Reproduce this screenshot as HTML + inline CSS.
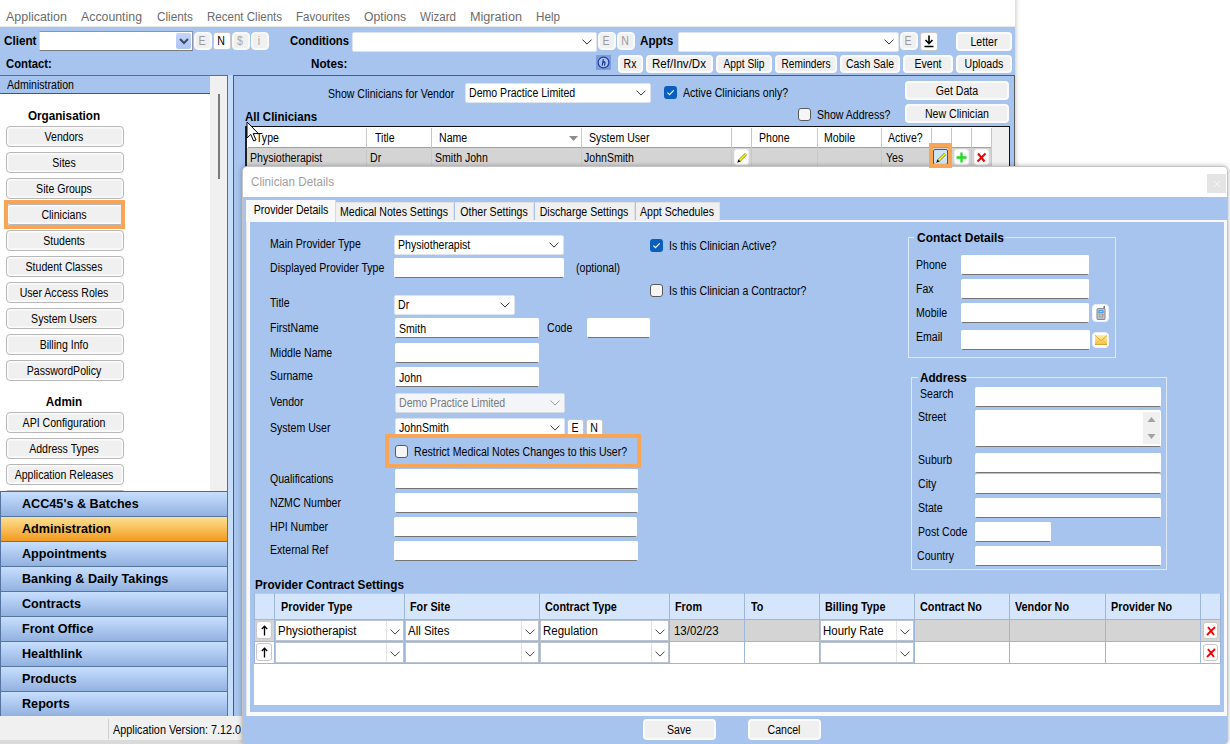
<!DOCTYPE html>
<html><head><meta charset="utf-8"><title>Clinician Details</title>
<style>
html,body{margin:0;padding:0;}
body{width:1230px;height:744px;position:relative;overflow:hidden;background:#fff;font-family:"Liberation Sans",sans-serif;}
div,span,svg{position:absolute;box-sizing:content-box;}
.t{font-size:12.5px;line-height:20px;height:20px;white-space:nowrap;color:#000;transform:scaleX(.845);transform-origin:0 50%;}
.t.c{width:300px;text-align:center;transform-origin:50% 50%;}
.b{font-weight:bold;font-size:13px;transform:scaleX(.9);}
.m{font-size:12.5px;line-height:20px;height:20px;white-space:nowrap;color:#6b6b6b;transform-origin:0 50%;}
.s{font-size:12px;line-height:20px;height:20px;white-space:nowrap;color:#000;transform-origin:0 50%;}
.s.c{width:300px;text-align:center;transform-origin:50% 50%;}
.btn{background:#f0f0f0;border:1px solid #b8b8b8;border-radius:4px;box-shadow:inset 0 0 0 1.5px #fbfbfb;}
.btnb{background:#f0f0f0;border:2px solid #fbfbfb;border-radius:4px;}
.sbtn{background:#fdfdfd;border:1px solid #c8c8c8;border-radius:3px;}
.sbtn.d{background:#f0f0f0;border-color:#f9f9f9;box-shadow:inset 0 0 0 1px #f9f9f9;border-radius:4px;}
.inp{background:#fff;border:1px solid #fff;border-bottom-color:#757575;border-radius:2px;}
.combo{background:#fff;border:1px solid #dde4ef;border-radius:2px;}
.combo.dis{background:#f3f5f9;border-color:#d9dde3;}
.chk{background:#f5f5f5;border:1px solid #5a5a5a;border-radius:3px;}
.chk.on{background:#0A5FBE;border:0;border-radius:3px;}
.nav{left:0;width:226px;height:24px;border:1px solid #55749f;border-top:0;background:linear-gradient(#c8dffc,#b2cdf3 40%,#92b1df);}
.nav.sel{background:linear-gradient(#fcdf94,#f8c25e 45%,#f29a20);}
.nav span{left:21px;top:2px;font-size:13.5px;font-weight:bold;line-height:20px;white-space:nowrap;transform:scaleX(.935);transform-origin:0 50%;}
.hl{border:3px solid #F8A656;}
.gh{font-size:12px;font-weight:bold;line-height:20px;white-space:nowrap;}
.g{font-size:12px;line-height:20px;white-space:nowrap;transform:scaleX(.955);transform-origin:0 50%;}
</style></head><body>

<div class="" style="left:0px;top:0px;width:1015px;height:27px;background:#fff;"></div>
<div class="" style="left:0px;top:26px;width:1015px;height:1px;background:#e8e8e8;"></div>
<span class="m" style="left: 6px; top: 7px; transform: scaleX(0.997);">Application</span>
<span class="m" style="left: 81px; top: 7px; transform: scaleX(0.986);">Accounting</span>
<span class="m" style="left: 157px; top: 7px; transform: scaleX(0.942);">Clients</span>
<span class="m" style="left: 207px; top: 7px; transform: scaleX(0.923);">Recent Clients</span>
<span class="m" style="left: 296px; top: 7px; transform: scaleX(0.925);">Favourites</span>
<span class="m" style="left: 364px; top: 7px; transform: scaleX(0.975);">Options</span>
<span class="m" style="left: 420px; top: 7px; transform: scaleX(0.925);">Wizard</span>
<span class="m" style="left: 470px; top: 7px; transform: scaleX(1.011);">Migration</span>
<span class="m" style="left: 536px; top: 7px; transform: scaleX(0.933);">Help</span>
<div class="" style="left:1015px;top:0px;width:5px;height:167px;background:linear-gradient(90deg,#d9d9d9,#f2f2f2 50%,#fff);"></div>
<div class="" style="left:0px;top:27px;width:1015px;height:49px;background:#A6C4EE;"></div>
<span class="t b" style="left:4px;top:31px;">Client</span>
<div class="" style="left:39px;top:31px;width:152px;height:18px;background:#fff;border:1px solid #8796b0;border-left-color:#c9d6ea;border-bottom-color:#7a7a7a;"></div>
<div class="" style="left:176px;top:33px;width:15px;height:16px;background:linear-gradient(#c3d6f9,#adc4f3);border-radius:2px;"><svg width="10" height="7" viewBox="0 0 10 7" style="left:2.5px;top:5px"><path d="M1 1 L5 5 L9 1" fill="none" stroke="#3c4a66" stroke-width="2"></path></svg></div>
<div class="sbtn d" style="left:194px;top:32px;width:16px;height:16px;"><span class="t c" style="left:-143.0px;top:-2.0px;color:#9a9a9a;">E</span></div>
<div class="sbtn" style="left:213px;top:32px;width:16px;height:16px;"><span class="t c" style="left:-143.0px;top:-2.0px;">N</span></div>
<div class="sbtn d" style="left:232px;top:32px;width:16px;height:16px;"><span class="t c" style="left:-143.0px;top:-2.0px;color:#a8a8a8;">$</span></div>
<div class="sbtn d" style="left:251px;top:32px;width:16px;height:16px;"><span class="t c" style="left:-143.0px;top:-2.0px;color:#a8a8a8;">i</span></div>
<span class="t b" style="left:290px;top:31px;transform:scaleX(.87);">Conditions</span>
<div class="combo" style="left:352px;top:32px;width:243px;height:18px;"><svg class="chev" style="right:4px;top:6.0px" width="10" height="6" viewBox="0 0 10 6"><path d="M0.5 0.6 L5 5.1 L9.5 0.6" fill="none" stroke="#333" stroke-width="1"></path></svg></div>
<div class="sbtn d" style="left:598px;top:32px;width:16px;height:16px;"><span class="t c" style="left:-143.0px;top:-2.0px;color:#9a9a9a;">E</span></div>
<div class="sbtn d" style="left:617px;top:32px;width:16px;height:16px;"><span class="t c" style="left:-143.0px;top:-2.0px;color:#9a9a9a;">N</span></div>
<span class="t b" style="left:640px;top:31px;">Appts</span>
<div class="combo" style="left:678px;top:32px;width:219px;height:18px;"><svg class="chev" style="right:4px;top:6.0px" width="10" height="6" viewBox="0 0 10 6"><path d="M0.5 0.6 L5 5.1 L9.5 0.6" fill="none" stroke="#333" stroke-width="1"></path></svg></div>
<div class="sbtn d" style="left:900px;top:32px;width:16px;height:16px;"><span class="t c" style="left:-143.0px;top:-2.0px;color:#9a9a9a;">E</span></div>
<div class="sbtn" style="left:920px;top:32px;width:16px;height:17px;"><svg width="12" height="13" viewBox="0 0 12 13" style="left:2px;top:2px"><path d="M6 0.5 V8 M2.5 5 L6 8.5 L9.5 5 M1.5 11.5 H10.5" fill="none" stroke="#000" stroke-width="1.6"></path></svg></div>
<div class="btnb" style="left:956px;top:32px;width:52px;height:15px;"><span class="t c" style="left:-124.5px;top:-2.5px;">Letter</span></div>
<span class="t b" style="left:6px;top:54px;transform:scaleX(.87);">Contact:</span>
<span class="t b" style="left:311px;top:54px;">Notes:</span>
<div class="" style="left:596px;top:55px;width:15px;height:15px;background:#7d9dd8;"><svg width="15" height="15" viewBox="0 0 15 15"><circle cx="7.5" cy="7.5" r="5.4" fill="#a9c2ee" stroke="#1a3aa6" stroke-width="1.2"></circle><path d="M7.4 4.2 L6.2 10.6 M6.8 8 Q8.6 6 9 7.6 L8.5 10.6" fill="none" stroke="#1a2f8a" stroke-width="1.1"></path></svg></div>
<div class="btnb" style="left:618px;top:55px;width:21px;height:14px;"><span class="t c" style="left:-140.0px;top:-3.0px;">Rx</span></div>
<div class="btnb" style="left:646px;top:55px;width:63px;height:14px;"><span class="t c" style="left: -119px; top: -3px; transform: scaleX(0.925);">Ref/Inv/Dx</span></div>
<div class="btnb" style="left:716px;top:55px;width:52px;height:14px;"><span class="t c" style="left: -124.5px; top: -3px; transform: scaleX(0.819);">Appt Slip</span></div>
<div class="btnb" style="left:775px;top:55px;width:58px;height:14px;"><span class="t c" style="left: -121.5px; top: -3px; transform: scaleX(0.811);">Reminders</span></div>
<div class="btnb" style="left:840px;top:55px;width:56px;height:14px;"><span class="t c" style="left: -122.5px; top: -3px; transform: scaleX(0.832);">Cash Sale</span></div>
<div class="btnb" style="left:903px;top:55px;width:46px;height:14px;"><span class="t c" style="left:-127.5px;top:-3.0px;">Event</span></div>
<div class="btnb" style="left:956px;top:55px;width:52px;height:14px;"><span class="t c" style="left:-124.5px;top:-3.0px;">Uploads</span></div>
<div class="" style="left:0px;top:75px;width:227px;height:416px;background:#fff;"></div>
<div class="" style="left:0px;top:75px;width:228px;height:1px;background:#6b6b6b;"></div>
<div class="" style="left:227px;top:75px;width:1px;height:641px;background:#6b6b6b;"></div>
<div class="" style="left:210px;top:76px;width:17px;height:415px;background:#f0f0f0;"></div>
<div class="" style="left:0px;top:76px;width:210px;height:17px;background:#A6C4EE;"></div>
<div class="" style="left:0px;top:93px;width:210px;height:1px;background:#555;"></div>
<div class="" style="left:218px;top:94px;width:2px;height:85px;background:#7a7a7a;"></div>
<span class="t" style="left:7px;top:75px;">Administration</span>
<span class="t b c" style="left:-86px;top:106px;">Organisation</span>
<div class="btn" style="left:6px;top:126px;width:116px;height:19px;"><span class="t c" style="left:-93.0px;top:-0.5px;">Vendors</span></div>
<div class="btn" style="left:6px;top:152px;width:116px;height:19px;"><span class="t c" style="left:-93.0px;top:-0.5px;">Sites</span></div>
<div class="btn" style="left:6px;top:178px;width:116px;height:19px;"><span class="t c" style="left:-93.0px;top:-0.5px;">Site Groups</span></div>
<div class="btn" style="left:6px;top:204px;width:116px;height:19px;"><span class="t c" style="left:-93.0px;top:-0.5px;">Clinicians</span></div>
<div class="btn" style="left:6px;top:230px;width:116px;height:19px;"><span class="t c" style="left:-93.0px;top:-0.5px;">Students</span></div>
<div class="btn" style="left:6px;top:256px;width:116px;height:19px;"><span class="t c" style="left:-93.0px;top:-0.5px;">Student Classes</span></div>
<div class="btn" style="left:6px;top:282px;width:116px;height:19px;"><span class="t c" style="left:-93.0px;top:-0.5px;">User Access Roles</span></div>
<div class="btn" style="left:6px;top:308px;width:116px;height:19px;"><span class="t c" style="left:-93.0px;top:-0.5px;">System Users</span></div>
<div class="btn" style="left:6px;top:334px;width:116px;height:19px;"><span class="t c" style="left:-93.0px;top:-0.5px;">Billing Info</span></div>
<div class="btn" style="left:6px;top:360px;width:116px;height:19px;"><span class="t c" style="left:-93.0px;top:-0.5px;">PasswordPolicy</span></div>
<span class="t b c" style="left:-86px;top:392px;">Admin</span>
<div class="btn" style="left:6px;top:412px;width:116px;height:19px;"><span class="t c" style="left:-93.0px;top:-0.5px;">API Configuration</span></div>
<div class="btn" style="left:6px;top:438px;width:116px;height:19px;"><span class="t c" style="left:-93.0px;top:-0.5px;">Address Types</span></div>
<div class="btn" style="left:6px;top:464px;width:116px;height:19px;"><span class="t c" style="left:-93.0px;top:-0.5px;">Application Releases</span></div>
<div class="btn" style="left:6px;top:490px;width:116px;height:3px;border-bottom:0;border-radius:3px 3px 0 0;height:1px;"></div>
<div class="hl" style="left:4px;top:200px;width:113px;height:21px;border-width:4px;"></div>
<div class="" style="left:0px;top:491px;width:227px;height:1px;background:#666;"></div>
<div class="nav" style="top:492px"><span>ACC45's &amp; Batches</span></div>
<div class="nav sel" style="top:517px"><span>Administration</span></div>
<div class="nav" style="top:542px"><span>Appointments</span></div>
<div class="nav" style="top:567px"><span>Banking &amp; Daily Takings</span></div>
<div class="nav" style="top:592px"><span>Contracts</span></div>
<div class="nav" style="top:617px"><span>Front Office</span></div>
<div class="nav" style="top:642px"><span>Healthlink</span></div>
<div class="nav" style="top:667px"><span>Products</span></div>
<div class="nav" style="top:692px"><span>Reports</span></div>
<div class="" style="left:0px;top:716px;width:1015px;height:24px;background:#f0f0f0;"></div>
<div class="" style="left:0px;top:740px;width:1015px;height:4px;background:#dadada;"></div>
<div class="" style="left:108px;top:719px;width:1px;height:20px;background:#cfcfcf;"></div>
<span class="t" style="left: 113px; top: 720px; transform: scaleX(0.865);">Application Version: 7.12.0.1</span>
<div class="" style="left:228px;top:75px;width:5px;height:641px;background:#c5dcfa;"></div>
<div class="" style="left:233px;top:75px;width:782px;height:641px;background:#A6C4EE;"></div>
<div class="" style="left:233px;top:75px;width:782px;height:1px;background:#5a5a5a;"></div>
<div class="" style="left:233px;top:75px;width:1px;height:641px;background:#5a5a5a;"></div>
<div class="" style="left:1014px;top:76px;width:1px;height:640px;background:#5a5a5a;"></div>
<span class="t" style="left:328px;top:84px;">Show Clinicians for Vendor</span>
<div class="combo" style="left:465px;top:83px;width:184px;height:18px;"><span class="t" style="left:3px;top:-1.0px;">Demo Practice Limited</span><svg class="chev" style="right:4px;top:6.0px" width="10" height="6" viewBox="0 0 10 6"><path d="M0.5 0.6 L5 5.1 L9.5 0.6" fill="none" stroke="#333" stroke-width="1"></path></svg></div>
<div class="chk on" style="left:664px;top:86px;width:13px;height:13px;"><svg width="13" height="13" viewBox="0 0 13 13" style="position:absolute;left:0;top:0"><path d="M3.4 6.6 L5.5 8.7 L9.7 4.3" fill="none" stroke="#fff" stroke-width="1.1"></path></svg></div>
<span class="t" style="left:683px;top:83px;">Active Clinicians only?</span>
<div class="btnb" style="left:905px;top:81px;width:100px;height:15px;"><span class="t c" style="left:-100.5px;top:-2.5px;">Get Data</span></div>
<div class="chk" style="left:798px;top:108px;width:11px;height:11px;"></div>
<span class="t" style="left:817px;top:105px;">Show Address?</span>
<div class="btnb" style="left:905px;top:104px;width:100px;height:15px;"><span class="t c" style="left:-100.5px;top:-2.5px;">New Clinician</span></div>
<span class="t b" style="left:245px;top:107px;font-size:13.5px;transform:scaleX(.85);">All Clinicians</span>
<div class="" style="left:246px;top:126px;width:764px;height:42px;background:#fff;"></div>
<div class="" style="left:992px;top:127px;width:17px;height:41px;background:#f0f0f0;"></div>
<div class="" style="left:246px;top:126px;width:764px;height:1px;background:#111;"></div>
<div class="" style="left:245px;top:126px;width:2px;height:42px;background:#222;"></div>
<div class="" style="left:1009px;top:126px;width:1px;height:42px;background:#111;"></div>
<div class="" style="left:247px;top:148px;width:745px;height:20px;background:#d4d4d4;"></div>
<div class="" style="left:248px;top:147px;width:743px;height:1px;background:#a0a0a0;"></div>
<div class="" style="left:366px;top:128px;width:1px;height:40px;background:#c8c8c8;"></div>
<div class="" style="left:431px;top:128px;width:1px;height:40px;background:#c8c8c8;"></div>
<div class="" style="left:581px;top:128px;width:1px;height:40px;background:#c8c8c8;"></div>
<div class="" style="left:731px;top:128px;width:1px;height:40px;background:#c8c8c8;"></div>
<div class="" style="left:751px;top:128px;width:1px;height:40px;background:#c8c8c8;"></div>
<div class="" style="left:817px;top:128px;width:1px;height:40px;background:#c8c8c8;"></div>
<div class="" style="left:881px;top:128px;width:1px;height:40px;background:#c8c8c8;"></div>
<div class="" style="left:931px;top:128px;width:1px;height:40px;background:#c8c8c8;"></div>
<div class="" style="left:951px;top:128px;width:1px;height:40px;background:#c8c8c8;"></div>
<div class="" style="left:971px;top:128px;width:1px;height:40px;background:#c8c8c8;"></div>
<div class="" style="left:991px;top:128px;width:1px;height:40px;background:#c8c8c8;"></div>
<span class="t" style="left:256px;top:128px;">Type</span>
<span class="t" style="left:375px;top:128px;">Title</span>
<span class="t" style="left:439px;top:128px;">Name</span>
<span class="t" style="left:589px;top:128px;">System User</span>
<span class="t" style="left:759px;top:128px;">Phone</span>
<span class="t" style="left:824px;top:128px;">Mobile</span>
<span class="t" style="left:888px;top:128px;">Active?</span>
<svg width="9" height="5" viewBox="0 0 9 5" style="left:569px;top:136px"><path d="M0 0 H9 L4.5 5 Z" fill="#8c8c8c"></path></svg>
<span class="t" style="left:250px;top:148px;">Physiotherapist</span>
<span class="t" style="left:370px;top:148px;">Dr</span>
<span class="t" style="left:435px;top:148px;">Smith John</span>
<span class="t" style="left:584px;top:148px;">JohnSmith</span>
<span class="t" style="left:886px;top:148px;">Yes</span>
<div class="sbtn" style="left:734px;top:149px;width:13px;height:14px;border-color:#f2f2f2;background:#fff;"><svg width="13" height="13" viewBox="0 0 13 13" style="left:1px;top:1px"><path d="M3 10 L10 3" stroke="#6a6a2a" stroke-width="2.6"></path><path d="M3.4 9.6 L10 3" stroke="#ffff00" stroke-width="1.6"></path><path d="M1.2 11.8 L4.6 10.6 L2.4 8.4 Z" fill="#111"></path></svg></div>
<div class="sbtn" style="left:933px;top:149px;width:13px;height:14px;border-color:#1f62ad;background:#cde4f7;border-radius:2px;"><svg width="13" height="13" viewBox="0 0 13 13" style="left:1px;top:1px"><path d="M3 10 L10 3" stroke="#6a6a2a" stroke-width="2.6"></path><path d="M3.4 9.6 L10 3" stroke="#ffff00" stroke-width="1.6"></path><path d="M1.2 11.8 L4.6 10.6 L2.4 8.4 Z" fill="#111"></path></svg></div>
<div class="sbtn" style="left:954px;top:149px;width:13px;height:14px;border-color:#f2f2f2;background:#fff;"><svg width="11" height="11" viewBox="0 0 11 11" style="left:1px;top:2px"><path d="M5.5 0.5 V10.5 M0.5 5.5 H10.5" stroke="#1fdc1f" stroke-width="2.3"></path></svg></div>
<div class="sbtn" style="left:974px;top:149px;width:13px;height:14px;border-color:#f2f2f2;background:#fff;"><svg width="11" height="11" viewBox="0 0 11 11" style="left:1px;top:2px"><path d="M2 1.5 L8.5 9.5 M9.5 1.5 L1.5 9.5" stroke="#f00000" stroke-width="2"></path></svg></div>
<svg width="14" height="22" viewBox="0 0 14 22" style="left:246px;top:121px"><path d="M1 1 V17 L4.8 13.4 L7.6 20 L10 19 L7.2 12.6 H12.4 Z" fill="#fff" stroke="#000" stroke-width="1"></path></svg>
<div class="" style="left:242px;top:166px;width:984px;height:577px;background:#A6C4EE;border-radius:5px;border:1px solid #c4c4c4;box-shadow:0 0 5px rgba(0,0,0,.3);overflow:hidden;"><div style="left:0;top:0;width:985px;height:30px;background:#fff"></div></div>
<span class="s" style="left: 251px; top: 172px; color: rgb(160, 160, 160); font-size: 12.5px; transform: scaleX(0.933);">Clinician Details</span>
<div class="" style="left:1207px;top:174px;width:19px;height:19px;background:#e4e4e4;"><svg width="8" height="8" viewBox="0 0 8 8" style="left:5.5px;top:5.5px"><path d="M1 1 L7 7 M7 1 L1 7" stroke="#f4f4f4" stroke-width="1"></path></svg></div>
<div class="" style="left:246px;top:220px;width:974px;height:490px;background:#A6C4EE;border:3px solid #f9f9f9;border-top-width:2px;border-left-width:4px;border-bottom-width:4px;"></div>
<div class="" style="left:246px;top:219px;width:1px;height:497px;background:#e6e6e6;"></div>
<div class="" style="left:335px;top:202px;width:118px;height:18px;background:#f0f0f0;border:1px solid #e2e2e2;border-bottom:0;border-left:0;"><span class="t c" style="left:-91.5px;top:-1px">Medical Notes Settings</span></div>
<div class="" style="left:455px;top:202px;width:78px;height:18px;background:#f0f0f0;border:1px solid #e2e2e2;border-bottom:0;border-left:0;"><span class="t c" style="left:-111.5px;top:-1px">Other Settings</span></div>
<div class="" style="left:535px;top:202px;width:99px;height:18px;background:#f0f0f0;border:1px solid #e2e2e2;border-bottom:0;border-left:0;"><span class="t c" style="left:-101.0px;top:-1px">Discharge Settings</span></div>
<div class="" style="left:636px;top:202px;width:83px;height:18px;background:#f0f0f0;border:1px solid #e2e2e2;border-bottom:0;border-left:0;"><span class="t c" style="left:-109.0px;top:-1px">Appt Schedules</span></div>
<div class="" style="left:246px;top:200px;width:89px;height:22px;background:#f9f9f9;border-right:1px solid #d9d9d9;"><span class="t c" style="left:-105px;top:0px">Provider Details</span></div>
<span class="t" style="left:270px;top:234px;">Main Provider Type</span>
<div class="combo" style="left:394px;top:235px;width:168px;height:18px;"><span class="t" style="left:3px;top:-1.0px;">Physiotherapist</span><svg class="chev" style="right:4px;top:6.0px" width="10" height="6" viewBox="0 0 10 6"><path d="M0.5 0.6 L5 5.1 L9.5 0.6" fill="none" stroke="#333" stroke-width="1"></path></svg></div>
<span class="t" style="left:270px;top:258px;">Displayed Provider Type</span>
<div class="inp" style="left:394px;top:258px;width:168px;height:18px;"></div>
<span class="t" style="left:576px;top:258px;">(optional)</span>
<span class="t" style="left:270px;top:293px;">Title</span>
<div class="combo" style="left:394px;top:295px;width:119px;height:18px;"><span class="t" style="left:3px;top:-1.0px;">Dr</span><svg class="chev" style="right:4px;top:6.0px" width="10" height="6" viewBox="0 0 10 6"><path d="M0.5 0.6 L5 5.1 L9.5 0.6" fill="none" stroke="#333" stroke-width="1"></path></svg></div>
<span class="t" style="left:270px;top:318px;">FirstName</span>
<div class="inp" style="left:395px;top:318px;width:142px;height:18px;"><span class="t" style="left:3px;top:0.0px">Smith</span></div>
<span class="t" style="left:547px;top:318px;">Code</span>
<div class="inp" style="left:587px;top:318px;width:61px;height:18px;"></div>
<span class="t" style="left:270px;top:343px;">Middle Name</span>
<div class="inp" style="left:395px;top:343px;width:142px;height:18px;"></div>
<span class="t" style="left:270px;top:366px;">Surname</span>
<div class="inp" style="left:395px;top:367px;width:142px;height:18px;"><span class="t" style="left:3px;top:0.0px">John</span></div>
<span class="t" style="left:270px;top:392px;">Vendor</span>
<div class="combo dis" style="left:395px;top:393px;width:168px;height:18px;"><span class="t" style="left:3px;top:-1.0px;color:#7a7a7a;">Demo Practice Limited</span><svg class="chev" style="right:4px;top:6.0px" width="10" height="6" viewBox="0 0 10 6"><path d="M0.5 0.6 L5 5.1 L9.5 0.6" fill="none" stroke="#9a9a9a" stroke-width="1"></path></svg></div>
<span class="t" style="left:270px;top:418px;">System User</span>
<div class="combo" style="left:395px;top:418px;width:168px;height:18px;"><span class="t" style="left:3px;top:-1.0px;">JohnSmith</span><svg class="chev" style="right:4px;top:6.0px" width="10" height="6" viewBox="0 0 10 6"><path d="M0.5 0.6 L5 5.1 L9.5 0.6" fill="none" stroke="#333" stroke-width="1"></path></svg></div>
<div class="sbtn" style="left:567px;top:419px;width:15px;height:16px;"><span class="t c" style="left:-143.5px;top:-2.0px;">E</span></div>
<div class="sbtn" style="left:586px;top:419px;width:15px;height:16px;"><span class="t c" style="left:-143.5px;top:-2.0px;">N</span></div>
<div class="hl" style="left:385px;top:434px;width:248px;height:26px;border-width:4px;"></div>
<div class="chk" style="left:395px;top:445px;width:11px;height:11px;"></div>
<span class="t" style="left:414px;top:442px;">Restrict Medical Notes Changes to this User?</span>
<span class="t" style="left:270px;top:469px;">Qualifications</span>
<div class="inp" style="left:395px;top:469px;width:241px;height:18px;"></div>
<span class="t" style="left:270px;top:493px;">NZMC Number</span>
<div class="inp" style="left:395px;top:493px;width:241px;height:18px;"></div>
<span class="t" style="left:270px;top:517px;">HPI Number</span>
<div class="inp" style="left:394px;top:517px;width:241px;height:18px;"></div>
<span class="t" style="left:270px;top:540px;">External Ref</span>
<div class="inp" style="left:394px;top:541px;width:242px;height:18px;"></div>
<div class="chk on" style="left:650px;top:239px;width:13px;height:13px;"><svg width="13" height="13" viewBox="0 0 13 13" style="position:absolute;left:0;top:0"><path d="M3.4 6.6 L5.5 8.7 L9.7 4.3" fill="none" stroke="#fff" stroke-width="1.1"></path></svg></div>
<span class="t" style="left:669px;top:236px;">Is this Clinician Active?</span>
<div class="chk" style="left:650px;top:284px;width:11px;height:11px;"></div>
<span class="t" style="left:669px;top:281px;">Is this Clinician a Contractor?</span>
<div class="" style="left:908px;top:237px;width:206px;height:119px;border:1px solid #dfe8f5;"></div>
<div class="" style="left:914px;top:230px;width:91px;height:16px;background:#A6C4EE;"></div>
<span class="t b" style="left: 916.5px; top: 228px; font-size: 13px; transform: scaleX(0.919);">Contact Details</span>
<span class="t" style="left:916px;top:255px;">Phone</span>
<span class="t" style="left:916px;top:279px;">Fax</span>
<span class="t" style="left:916px;top:303px;">Mobile</span>
<span class="t" style="left:916px;top:327px;">Email</span>
<div class="inp" style="left:961px;top:255px;width:126px;height:18px;"></div>
<div class="inp" style="left:961px;top:279px;width:126px;height:18px;"></div>
<div class="inp" style="left:961px;top:303px;width:126px;height:18px;"></div>
<div class="inp" style="left:961px;top:330px;width:127px;height:18px;"></div>
<div class="sbtn" style="left:1092px;top:304px;width:15px;height:16px;border-color:#eef0f4;background:#fff;border-radius:4px;"><svg width="10" height="14" viewBox="0 0 10 14" style="left:3px;top:1px"><path d="M8.2 0 V3.4" stroke="#555" stroke-width="1.2"></path><rect x="1" y="2.6" width="8" height="11" rx=".8" fill="#c9ccd2" stroke="#7e838c" stroke-width="1"></rect><rect x="2.5" y="4.2" width="5" height="3" fill="#2f8fef"></rect><rect x="3.5" y="5.2" width="3" height="1" fill="#cfe6ff"></rect><rect x="2.6" y="8.4" width="2" height="1" fill="#3cc23c"></rect><rect x="5.8" y="8.4" width="1.6" height="1" fill="#e03030"></rect><path d="M2.6 10.5 H7.4 M2.6 12 H7.4" stroke="#8a8f98" stroke-width=".9" stroke-dasharray="1.1 .7"></path></svg></div>
<div class="sbtn" style="left:1092px;top:332px;width:15px;height:14px;border-color:#eef0f4;background:#fff;border-radius:4px;"><svg width="12" height="10" viewBox="0 0 12 10" style="left:1.5px;top:2px"><defs><linearGradient id="env" x1="0" y1="0" x2="0" y2="1"><stop offset="0" stop-color="#fdeea6"></stop><stop offset="1" stop-color="#f1c23f"></stop></linearGradient></defs><rect x="0" y="0" width="12" height="10" fill="url(#env)"></rect><path d="M0 .3 L6 5.8 L12 .3" fill="none" stroke="#d9a92e" stroke-width=".9"></path><path d="M0 10 L4.4 5 M12 10 L7.6 5" fill="none" stroke="#e6bd55" stroke-width=".7"></path><path d="M0 9.7 H12" stroke="#c9962a" stroke-width=".8"></path></svg></div>
<div class="" style="left:911px;top:377px;width:254px;height:191px;border:1px solid #dfe8f5;"></div>
<div class="" style="left:918px;top:370px;width:48px;height:16px;background:#A6C4EE;"></div>
<span class="t b" style="left:920px;top:368px;font-size:13px;">Address</span>
<span class="t" style="left:920px;top:384px;">Search</span>
<span class="t" style="left:918px;top:407px;">Street</span>
<span class="t" style="left:918px;top:450px;">Suburb</span>
<span class="t" style="left:918px;top:474px;">City</span>
<span class="t" style="left:918px;top:498px;">State</span>
<span class="t" style="left:918px;top:522px;">Post Code</span>
<span class="t" style="left:917px;top:546px;">Country</span>
<div class="inp" style="left:975px;top:387px;width:184px;height:18px;"></div>
<div class="inp" style="left:975px;top:410px;width:184px;height:35px;"></div>
<div class="inp" style="left:975px;top:453px;width:184px;height:18px;"></div>
<div class="inp" style="left:975px;top:474px;width:184px;height:18px;"></div>
<div class="inp" style="left:975px;top:498px;width:184px;height:18px;"></div>
<div class="inp" style="left:975px;top:522px;width:74px;height:18px;"></div>
<div class="inp" style="left:975px;top:546px;width:184px;height:18px;"></div>
<div class="" style="left:1143px;top:412px;width:17px;height:32px;background:#f0f0f0;"><svg width="17" height="32" viewBox="0 0 17 32"><path d="M4.5 10 L8.5 5 L12.5 10 Z M4.5 22 L8.5 27 L12.5 22 Z" fill="#a3a3a3"></path></svg></div>
<span class="t b" style="left: 255px; top: 575px; font-size: 13.5px; transform: scaleX(0.871);">Provider Contract Settings</span>
<div class="" style="left:254px;top:593px;width:966px;height:112px;background:#fff;"></div>
<div class="" style="left:254px;top:593px;width:966px;height:27px;background:#d5e5fb;"></div>
<div class="" style="left:254px;top:620px;width:966px;height:22px;background:#d4d4d4;"></div>
<div class="" style="left:254px;top:593px;width:966px;height:1px;background:#b9cdea;"></div>
<div class="" style="left:254px;top:619px;width:966px;height:1px;background:#9db7dc;"></div>
<div class="" style="left:254px;top:641px;width:966px;height:1px;background:#9db7dc;"></div>
<div class="" style="left:254px;top:663px;width:966px;height:1px;background:#9db7dc;"></div>
<div class="" style="left:254px;top:593px;width:1px;height:71px;background:#9db7dc;"></div>
<div class="" style="left:274px;top:593px;width:1px;height:71px;background:#9db7dc;"></div>
<div class="" style="left:404px;top:593px;width:1px;height:71px;background:#9db7dc;"></div>
<div class="" style="left:539px;top:593px;width:1px;height:71px;background:#9db7dc;"></div>
<div class="" style="left:669px;top:593px;width:1px;height:71px;background:#9db7dc;"></div>
<div class="" style="left:744px;top:593px;width:1px;height:71px;background:#9db7dc;"></div>
<div class="" style="left:819px;top:593px;width:1px;height:71px;background:#9db7dc;"></div>
<div class="" style="left:914px;top:593px;width:1px;height:71px;background:#9db7dc;"></div>
<div class="" style="left:1009px;top:593px;width:1px;height:71px;background:#9db7dc;"></div>
<div class="" style="left:1105px;top:593px;width:1px;height:71px;background:#9db7dc;"></div>
<div class="" style="left:1200px;top:593px;width:1px;height:71px;background:#9db7dc;"></div>
<div class="" style="left:1220px;top:593px;width:1px;height:71px;background:#9db7dc;"></div>
<span class="gh" style="left:281px;top:597px;transform:scaleX(.90);transform-origin:0 50%">Provider Type</span>
<span class="gh" style="left:410px;top:597px;transform:scaleX(.90);transform-origin:0 50%">For Site</span>
<span class="gh" style="left:545px;top:597px;transform:scaleX(.90);transform-origin:0 50%">Contract Type</span>
<span class="gh" style="left:675px;top:597px;transform:scaleX(.90);transform-origin:0 50%">From</span>
<span class="gh" style="left:751px;top:597px;transform:scaleX(.90);transform-origin:0 50%">To</span>
<span class="gh" style="left:825px;top:597px;transform:scaleX(.90);transform-origin:0 50%">Billing Type</span>
<span class="gh" style="left:920px;top:597px;transform:scaleX(.90);transform-origin:0 50%">Contract No</span>
<span class="gh" style="left:1015px;top:597px;transform:scaleX(.90);transform-origin:0 50%">Vendor No</span>
<span class="gh" style="left:1111px;top:597px;transform:scaleX(.90);transform-origin:0 50%">Provider No</span>
<div class="sbtn" style="left:256px;top:621px;width:14px;height:16px;"><svg width="7" height="11" viewBox="0 0 7 11" style="left:3.5px;top:2.5px"><path d="M3.5 1 V10.5 M0.8 4 L3.5 1.2 L6.2 4" fill="none" stroke="#000" stroke-width="1.3"></path></svg></div>
<div class="" style="left:275px;top:620px;width:127px;height:19px;background:#fff;border:1px solid #b8c4d4;"><span class="g" style="left:2px;top:-0.5px">Physiotherapist</span><svg class="chev" style="right:3px;top:7.5px" width="10" height="6" viewBox="0 0 10 6"><path d="M0.5 0.6 L5 5.1 L9.5 0.6" fill="none" stroke="#444" stroke-width="1"></path></svg><div style="right:16px;top:0;width:1px;height:19px;background:#e3e3e3"></div></div>
<div class="" style="left:405px;top:620px;width:132px;height:19px;background:#fff;border:1px solid #b8c4d4;"><span class="g" style="left:2px;top:-0.5px">All Sites</span><svg class="chev" style="right:3px;top:7.5px" width="10" height="6" viewBox="0 0 10 6"><path d="M0.5 0.6 L5 5.1 L9.5 0.6" fill="none" stroke="#444" stroke-width="1"></path></svg><div style="right:16px;top:0;width:1px;height:19px;background:#e3e3e3"></div></div>
<div class="" style="left:540px;top:620px;width:127px;height:19px;background:#fff;border:1px solid #b8c4d4;"><span class="g" style="left:2px;top:-0.5px">Regulation</span><svg class="chev" style="right:3px;top:7.5px" width="10" height="6" viewBox="0 0 10 6"><path d="M0.5 0.6 L5 5.1 L9.5 0.6" fill="none" stroke="#444" stroke-width="1"></path></svg><div style="right:16px;top:0;width:1px;height:19px;background:#e3e3e3"></div></div>
<div class="" style="left:820px;top:620px;width:92px;height:19px;background:#fff;border:1px solid #b8c4d4;"><span class="g" style="left:2px;top:-0.5px">Hourly Rate</span><svg class="chev" style="right:3px;top:7.5px" width="10" height="6" viewBox="0 0 10 6"><path d="M0.5 0.6 L5 5.1 L9.5 0.6" fill="none" stroke="#444" stroke-width="1"></path></svg><div style="right:16px;top:0;width:1px;height:19px;background:#e3e3e3"></div></div>
<div class="sbtn" style="left:1203px;top:622px;width:13px;height:15px;"><svg width="10" height="10" viewBox="0 0 10 10" style="left:1.5px;top:2.5px"><path d="M2 1 L8 9 M9 1 L1 9" stroke="#f00000" stroke-width="1.8"></path></svg></div>
<div class="sbtn" style="left:256px;top:643px;width:14px;height:16px;"><svg width="7" height="11" viewBox="0 0 7 11" style="left:3.5px;top:2.5px"><path d="M3.5 1 V10.5 M0.8 4 L3.5 1.2 L6.2 4" fill="none" stroke="#000" stroke-width="1.3"></path></svg></div>
<div class="" style="left:275px;top:642px;width:127px;height:19px;background:#fff;border:1px solid #b8c4d4;"><svg class="chev" style="right:3px;top:7.5px" width="10" height="6" viewBox="0 0 10 6"><path d="M0.5 0.6 L5 5.1 L9.5 0.6" fill="none" stroke="#444" stroke-width="1"></path></svg><div style="right:16px;top:0;width:1px;height:19px;background:#e3e3e3"></div></div>
<div class="" style="left:405px;top:642px;width:132px;height:19px;background:#fff;border:1px solid #b8c4d4;"><svg class="chev" style="right:3px;top:7.5px" width="10" height="6" viewBox="0 0 10 6"><path d="M0.5 0.6 L5 5.1 L9.5 0.6" fill="none" stroke="#444" stroke-width="1"></path></svg><div style="right:16px;top:0;width:1px;height:19px;background:#e3e3e3"></div></div>
<div class="" style="left:540px;top:642px;width:127px;height:19px;background:#fff;border:1px solid #b8c4d4;"><svg class="chev" style="right:3px;top:7.5px" width="10" height="6" viewBox="0 0 10 6"><path d="M0.5 0.6 L5 5.1 L9.5 0.6" fill="none" stroke="#444" stroke-width="1"></path></svg><div style="right:16px;top:0;width:1px;height:19px;background:#e3e3e3"></div></div>
<div class="" style="left:820px;top:642px;width:92px;height:19px;background:#fff;border:1px solid #b8c4d4;"><svg class="chev" style="right:3px;top:7.5px" width="10" height="6" viewBox="0 0 10 6"><path d="M0.5 0.6 L5 5.1 L9.5 0.6" fill="none" stroke="#444" stroke-width="1"></path></svg><div style="right:16px;top:0;width:1px;height:19px;background:#e3e3e3"></div></div>
<div class="sbtn" style="left:1203px;top:644px;width:13px;height:15px;"><svg width="10" height="10" viewBox="0 0 10 10" style="left:1.5px;top:2.5px"><path d="M2 1 L8 9 M9 1 L1 9" stroke="#f00000" stroke-width="1.8"></path></svg></div>
<span class="g" style="left:674px;top:621px">13/02/23</span>
<div class="btnb" style="left:643px;top:719px;width:69px;height:17px;"><span class="t c" style="left:-116.0px;top:-1.5px;">Save</span></div>
<div class="btnb" style="left:748px;top:719px;width:69px;height:17px;"><span class="t c" style="left:-116.0px;top:-1.5px;">Cancel</span></div>
<div class="hl" style="left:929px;top:143px;width:15px;height:17px;border-width:4px;"></div>
</body></html>
